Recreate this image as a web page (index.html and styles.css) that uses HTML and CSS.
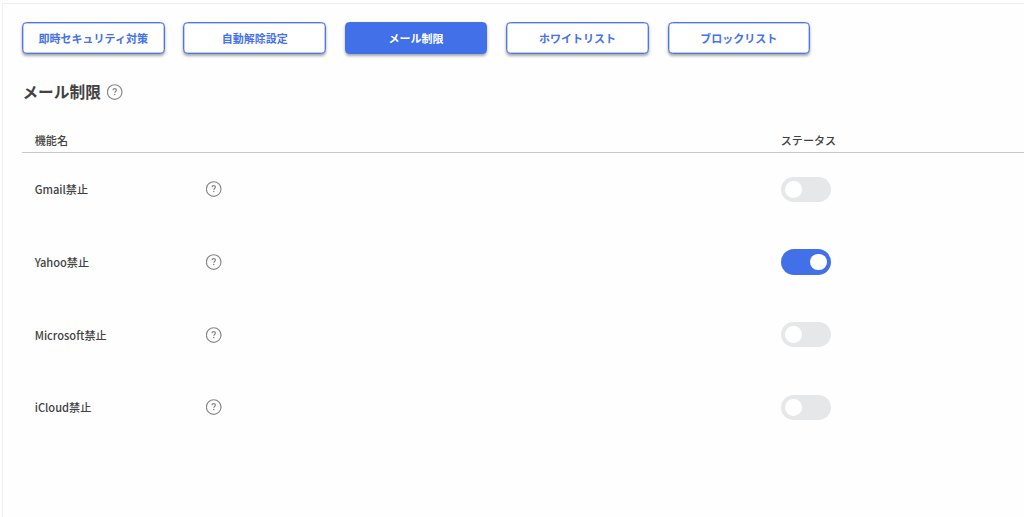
FILE: index.html
```html
<!DOCTYPE html>
<html lang="ja">
<head>
<meta charset="utf-8">
<title>メール制限</title>
<link rel="stylesheet" href="styles.css">
</head>
<body>
<svg class="sprite" width="0" height="0" aria-hidden="true">
  <symbol id="help" viewBox="0 0 16 16">
    <circle cx="7.7" cy="8" r="7.3" fill="none" stroke="currentColor" stroke-width="1.15"/>
    <path d="M6 6.2c0-1 .6-1.6 1.7-1.6s1.7.6 1.7 1.5c0 1.3-1.6 1.5-1.6 2.7" fill="none" stroke="currentColor" stroke-width="1.2"/>
    <circle cx="7.75" cy="10.5" r=".75" fill="currentColor"/>
  </symbol>
</svg>
<main class="panel">
  <nav class="tabs">
    <button class="tab">即時セキュリティ対策</button>
    <button class="tab">自動解除設定</button>
    <button class="tab tab-active">メール制限</button>
    <button class="tab">ホワイトリスト</button>
    <button class="tab">ブロックリスト</button>
  </nav>
  <h1 class="title"><span>メール制限</span><svg class="help"><use href="#help"/></svg></h1>
  <section class="table">
    <div class="row head"><span>機能名</span><span></span><span>ステータス</span></div>
    <div class="row"><span>Gmail禁止</span><svg class="help"><use href="#help"/></svg><span class="toggle"></span></div>
    <div class="row"><span>Yahoo禁止</span><svg class="help"><use href="#help"/></svg><span class="toggle toggle-on"></span></div>
    <div class="row"><span>Microsoft禁止</span><svg class="help"><use href="#help"/></svg><span class="toggle"></span></div>
    <div class="row"><span>iCloud禁止</span><svg class="help"><use href="#help"/></svg><span class="toggle"></span></div>
  </section>
</main>
</body>
</html>
```
FILE: styles.css
```css
* { box-sizing: border-box; }
body {
  margin: 0;
  padding: 3px 0 0 2px;
  height: 517px;
  overflow: hidden;
  background: #fefefe;
  color: #424242;
  font-family: "Noto Sans CJK JP", sans-serif;
}
.sprite { display: none; }
.panel {
  height: 514px;
  padding: 18.4px 0 0 19px;
  border-top: 1px solid #f0f0f0;
  border-left: 1px solid #f0f0f0;
}
.tabs { display: flex; gap: 18.9px; }
.tab {
  width: 142.5px;
  height: 32px;
  padding: 0 0 1px;
  border: 1px solid #4a76eb;
  border-radius: 4.5px;
  background: #fff;
  color: #4472ea;
  box-shadow: inset 0 0 0 .5px #7f9ef1, 0 2px 3px rgba(0, 0, 0, .34);
  font: bold 11px/16px "Noto Sans CJK JP", sans-serif;
}
.tab-active {
  background: #4170e8;
  border-color: #4170e8;
  color: #fff;
  box-shadow: 0 2px 3px rgba(0, 0, 0, .34);
}
.title {
  display: flex;
  align-items: center;
  gap: 6px;
  height: 24px;
  margin: 25.4px 0 0 .4px;
  font-size: 15.7px;
  line-height: 24px;
}
.help { display: block; width: 16px; height: 16px; color: #868686; }
.table { margin-top: 25.7px; }
.row {
  display: grid;
  grid-template-columns: 171px 575px 1fr;
  align-items: center;
  height: 72.7px;
  padding-left: 12.7px;
  font-size: 11.1px;
  font-weight: 500;
  line-height: 16px;
}
.head { height: 23.5px; padding-bottom: 1.4px; border-bottom: 1px solid #c8c8c8; }
.toggle {
  display: flex;
  align-items: center;
  width: 50.5px;
  height: 25.5px;
  padding: 0 4.5px;
  border-radius: 13px;
  background: #e6e7e9;
}
.toggle::before {
  content: "";
  width: 16.5px;
  height: 16.5px;
  border-radius: 50%;
  background: #fff;
}
.toggle-on { justify-content: flex-end; background: #4170e8; }
```
